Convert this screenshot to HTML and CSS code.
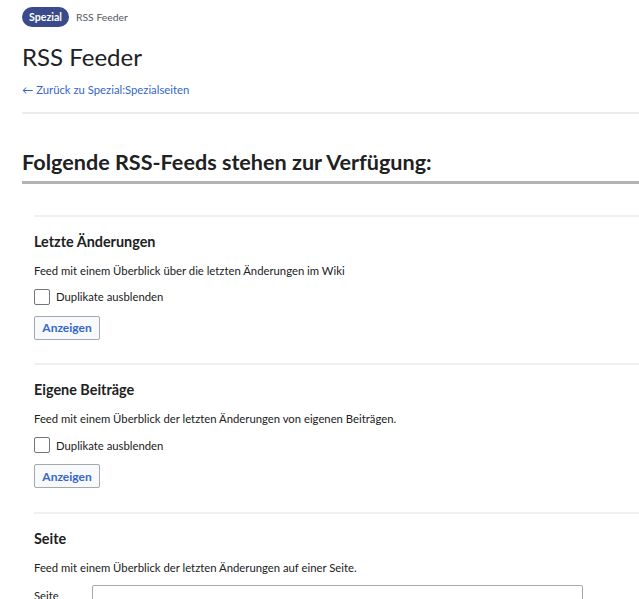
FILE: index.html
```html
<!DOCTYPE html>
<html lang="de">
<head>
<meta charset="utf-8">
<title>RSS Feeder</title>
<link rel="stylesheet" href="styles.css">
</head>
<body>
<div class="page">
  <div class="crumbs">
    <span class="badge">Spezial</span>
    <span class="crumb">RSS Feeder</span>
  </div>
  <h1 class="title">RSS Feeder</h1>
  <a class="back" href="#">← Zurück zu Spezial:Spezialseiten</a>
  <hr class="rule">
  <h2 class="heading">Folgende RSS-Feeds stehen zur Verfügung:</h2>
  <div class="sections">
    <section class="feed">
      <h3 class="feed-title">Letzte Änderungen</h3>
      <p class="feed-desc">Feed mit einem Überblick über die letzten Änderungen im Wiki</p>
      <label class="check"><span class="box"></span>Duplikate ausblenden</label>
      <button class="btn">Anzeigen</button>
    </section>
    <section class="feed">
      <h3 class="feed-title">Eigene Beiträge</h3>
      <p class="feed-desc">Feed mit einem Überblick der letzten Änderungen von eigenen Beiträgen.</p>
      <label class="check"><span class="box"></span>Duplikate ausblenden</label>
      <button class="btn">Anzeigen</button>
    </section>
    <section class="feed">
      <h3 class="feed-title">Seite</h3>
      <p class="feed-desc">Feed mit einem Überblick der letzten Änderungen auf einer Seite.</p>
      <div class="field"><span class="field-label">Seite</span><span class="input"></span></div>
    </section>
  </div>
</div>
</body>
</html>
```
FILE: styles.css
```css
html, body {
  margin: 0;
  padding: 0;
  background: #fff;
}
body {
  font-family: Lato, "Open Sans", sans-serif;
  color: #202122;
  overflow: hidden;
  height: 599px;
}
.page {
  padding: 7px 0 0 22px;
}
.crumbs {
  display: flex;
  align-items: center;
  gap: 7px;
  height: 20px;
}
.badge {
  background: #3a4a8b;
  color: #fff;
  font-weight: 700;
  font-size: 10.6px;
  height: 20px;
  line-height: 20px;
  padding: 0 7px;
  border-radius: 10px;
}
.crumb {
  font-size: 10.4px;
  color: #54595d;
}
.title {
  font-size: 24px;
  font-weight: 400;
  line-height: 32px;
  margin: 14px 0 0 0;
  color: #202122;
}
.back {
  display: block;
  font-size: 11.3px;
  line-height: 16px;
  color: #3366cc;
  text-decoration: none;
  margin-top: 9px;
}
.rule {
  border: 0;
  border-top: 2px solid #eaecf0;
  margin: 14px 0 0 0;
}
.heading {
  font-size: 21.6px;
  font-weight: 700;
  line-height: 28px;
  margin: 34px 0 0 0;
  padding-bottom: 5px;
  border-bottom: 3px solid #b3b3b3;
  color: #202122;
}
.sections {
  padding-left: 12px;
  margin-top: 30.5px;
}
.feed {
  box-sizing: border-box;
  border-top: 2px solid #eff0f2;
  height: 148.5px;
  padding-top: 15px;
}
.feed-title {
  font-size: 14.4px;
  font-weight: 700;
  line-height: 20px;
  margin: 0;
}
.feed-desc {
  font-size: 11.3px;
  line-height: 16px;
  margin: 11px 0 0 0;
}
.check {
  display: flex;
  align-items: center;
  gap: 6px;
  font-size: 11.3px;
  height: 16px;
  margin-top: 10px;
}
.box {
  box-sizing: border-box;
  width: 16px;
  height: 16px;
  border: 1px solid #72777d;
  border-radius: 2px;
  background: #fff;
}
.btn {
  display: block;
  box-sizing: border-box;
  margin-top: 11px;
  width: 66px;
  height: 24px;
  border: 1px solid #a2a9b1;
  border-radius: 2px;
  background: #f8f9fa;
  color: #3366cc;
  font-family: Lato, sans-serif;
  font-weight: 700;
  font-size: 12px;
  padding: 0;
}
.field {
  display: flex;
  align-items: flex-start;
  margin-top: 9px;
}
.field-label {
  width: 58px;
  font-size: 11.3px;
  padding-top: 4px;
}
.input {
  box-sizing: border-box;
  width: 491px;
  height: 30px;
  border: 1px solid #a2a9b1;
  border-radius: 2px;
}
```
